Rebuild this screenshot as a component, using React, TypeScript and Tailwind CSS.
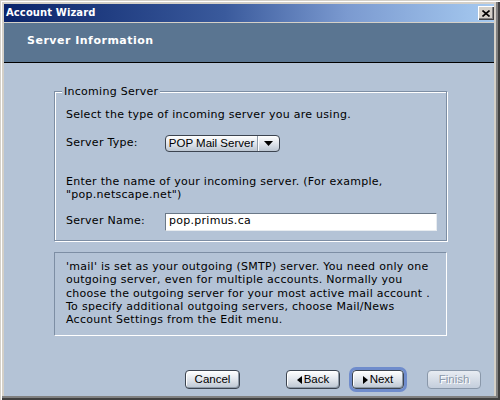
import React from "react";

const btnBase =
  "h-[19px] rounded-[4px] border border-[#3c4450] bg-[linear-gradient(#ffffff,#e4e8ee_45%,#bcc6d2)] shadow-[inset_1px_1px_0_#fff,inset_-1px_-1px_0_#8e9aa8] flex items-center justify-center text-[11.5px] text-black font-['Liberation_Sans',Arial,sans-serif]";

function LeftTri() {
  return (
    <svg width="5" height="8" viewBox="0 0 5 8" className="mr-[2px]">
      <polygon points="5,0 5,8 0,4" fill="#000" />
    </svg>
  );
}
function RightTri() {
  return (
    <svg width="5" height="8" viewBox="0 0 5 8" className="mr-[2px]">
      <polygon points="0,0 5,4 0,8" fill="#000" />
    </svg>
  );
}

export default function App() {
  return (
    <div className="w-[500px] h-[400px] bg-[#d4d0c8] pl-[4px] pt-[4px] pr-[6px] pb-[4px] shadow-[inset_1px_1px_0_#d4d0c8,inset_2px_2px_0_#ffffff,inset_-2px_-2px_0_#404040,inset_-4px_-4px_0_#808080] font-['DejaVu_Sans',Verdana,sans-serif] flex flex-col">
      {/* Title bar */}
      <div className="h-[18px] flex items-center bg-[linear-gradient(90deg,#0a246a,#3a5a9c_45%,#7b9ad0_70%,#a6caf0)]">
        <span className="pl-[2px] text-white font-bold text-[10px] tracking-[0.1px] leading-none">
          Account Wizard
        </span>
        <div className="ml-auto mr-[0px] w-[16px] h-[14px] bg-[#d4d0c8] shadow-[inset_1px_1px_0_#fff,inset_-1px_-1px_0_#404040,inset_-2px_-2px_0_#808080] flex items-center justify-center">
          <svg width="8" height="7" viewBox="0 0 8 7">
            <path d="M0.5 0.5 L7.5 6.5 M7.5 0.5 L0.5 6.5" stroke="#000" strokeWidth="1.6" />
          </svg>
        </div>
      </div>
      <div className="h-[1px]" />
      {/* Header */}
      <div className="h-[40px] bg-[#5a7591] border-b border-black flex items-center pl-[23px] pb-[3px]">
        <span className="text-white font-bold text-[11px] tracking-[0.5px]">
          Server Information
        </span>
      </div>
      {/* Body */}
      <div className="flex-1 bg-[#b4c3d6] flex flex-col text-[11px] tracking-[0.27px] text-black">
        <div className="relative mt-[28px] ml-[50px] w-[393px] h-[150px] border border-[#7d8ea4] shadow-[inset_1px_1px_0_#fff,1px_1px_0_#fff] pl-[11px] pt-[16px] flex flex-col">
          <span className="absolute left-[7px] top-[-7px] px-[2px] bg-[#b4c3d6] leading-[13px]">
            Incoming Server
          </span>
          <p className="leading-[13px] h-[13px] whitespace-nowrap">Select the type of incoming server you are using.</p>
          <div className="mt-[14px] h-[17px] flex items-center">
            <span className="w-[99px]">Server Type:</span>
            <div className="h-[17px] w-[115px] rounded-[4px] border border-[#3c4450] bg-[linear-gradient(#ffffff,#e4e8ee_45%,#bcc6d2)] flex items-stretch font-['Liberation_Sans',Arial,sans-serif] text-[11.5px] tracking-normal">
              <span className="flex-1 flex items-center justify-center border-r border-[#8e9aa8]">
                POP Mail Server
              </span>
              <span className="w-[21px] flex items-center justify-center shadow-[inset_1px_0_0_#fff]">
                <svg width="9" height="5" viewBox="0 0 9 5">
                  <polygon points="0,0 9,0 4.5,5" fill="#000" />
                </svg>
              </span>
            </div>
          </div>
          <p className="mt-[23px] leading-[13px] whitespace-nowrap">
            Enter the name of your incoming server. (For example,
            <br />
            "pop.netscape.net")
          </p>
          <div className="mt-[12px] h-[17px] flex items-center">
            <span className="w-[99px]">Server Name:</span>
            <div className="h-[18px] w-[272px] bg-white border-t border-l border-[#6a7888] border-b border-r border-b-[#e8ecf0] border-r-[#e8ecf0] flex items-center pl-[3px]">
              pop.primus.ca
            </div>
          </div>
        </div>
        <div className="mt-[11px] ml-[50px] w-[393px] h-[84px] border-t border-l border-[#7d8ea4] border-b border-r border-b-white border-r-white pl-[11px] pt-[7px] leading-[13.3px] whitespace-nowrap">
          'mail' is set as your outgoing (SMTP) server. You need only one
          <br />
          outgoing server, even for multiple accounts. Normally you
          <br />
          choose the outgoing server for your most active mail account .
          <br />
          To specify additional outgoing servers, choose Mail/News
          <br />
          Account Settings from the Edit menu.
        </div>
        <div className="mt-[34px] flex items-center tracking-normal">
          <div className={`${btnBase} ml-[181px] w-[55px]`}>Cancel</div>
          <div className={`${btnBase} ml-[46px] w-[54px]`}>
            <LeftTri />
            Back
          </div>
          <div className={`${btnBase} ml-[12px] w-[52px] outline outline-[3px] outline-[#6f8ccc] `}>
            <RightTri />
            Next
          </div>
          <div className="ml-[23px] w-[54px] h-[19px] rounded-[4px] border border-[#8a98aa] bg-[linear-gradient(#e8ecf2,#c4cedc)] flex items-center justify-center text-[11.5px] text-[#8a98aa] font-['Liberation_Sans',Arial,sans-serif] [text-shadow:1px_1px_0_#fff]">
            Finish
          </div>
        </div>
      </div>
    </div>
  );
}
